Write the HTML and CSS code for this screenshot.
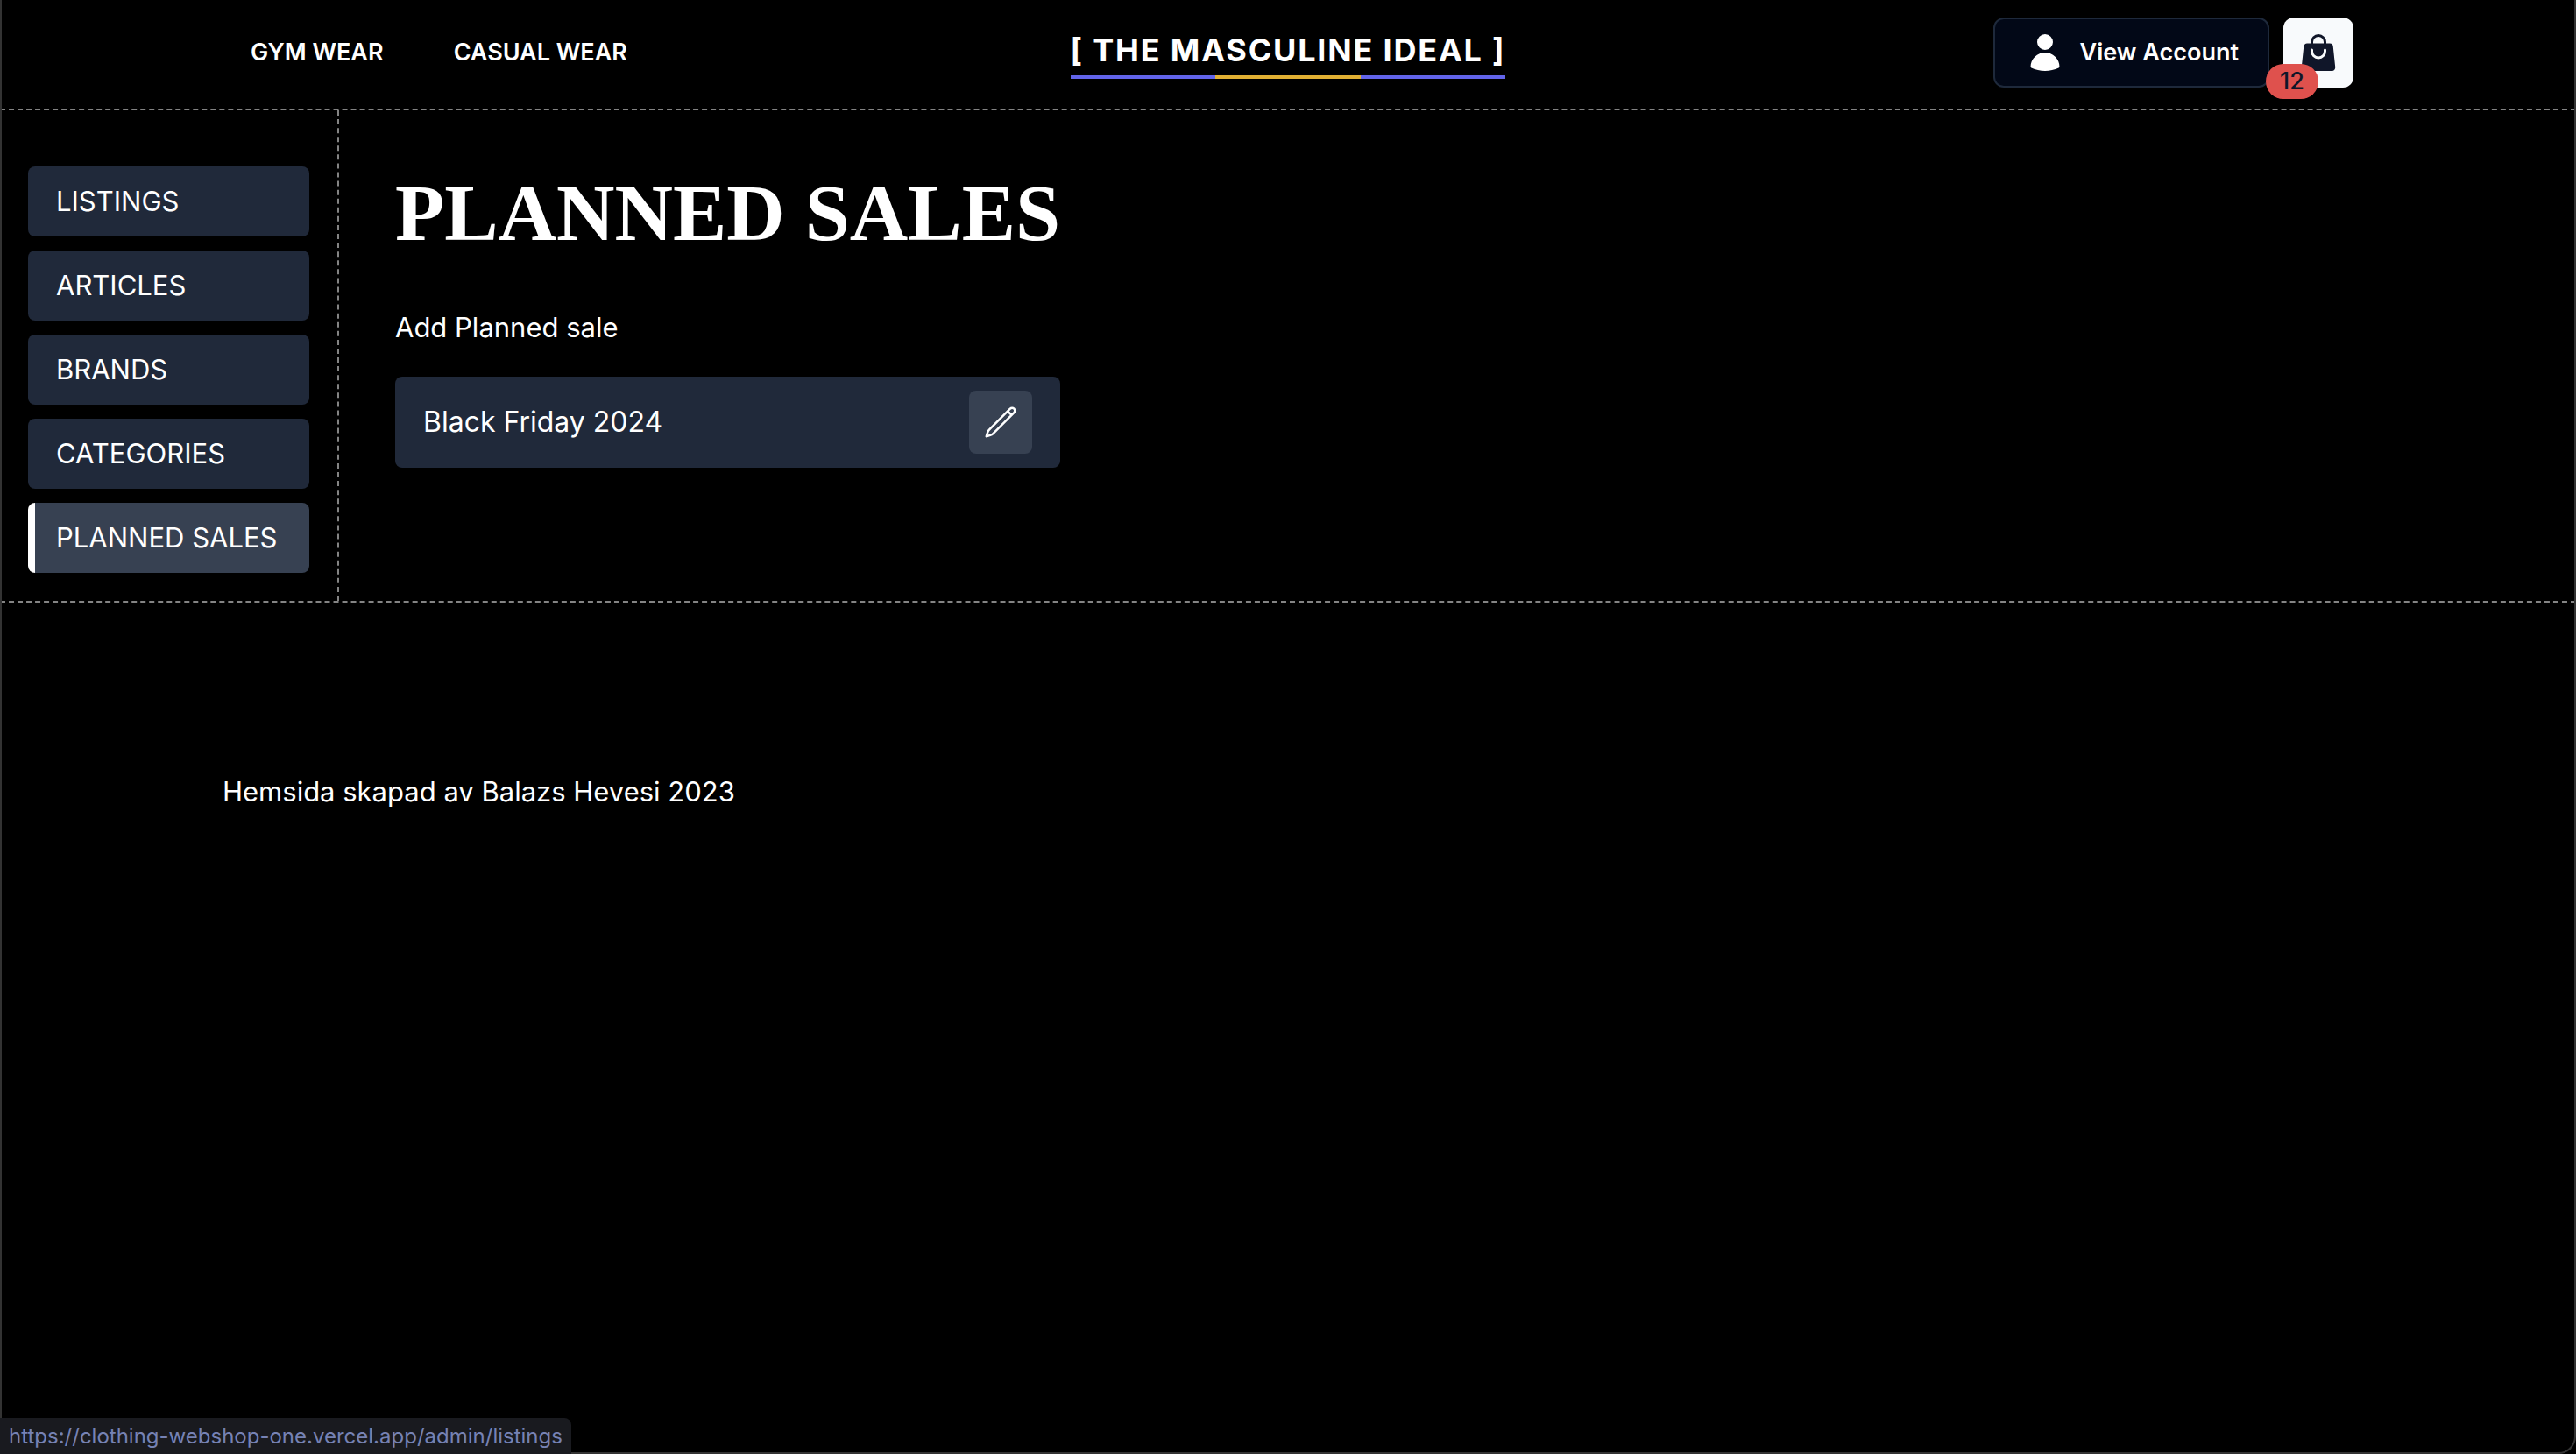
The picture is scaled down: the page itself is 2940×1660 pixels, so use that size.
FILE: index.html
```
<!DOCTYPE html>
<html lang="en">
<head>
  <meta charset="utf-8">
  <meta name="viewport" content="width=device-width, initial-scale=1">
  <title>Planned sales</title>
  <link rel="stylesheet" href="styles.css">
</head>
<body>
  <header class="site-header">
    <div class="container header-row">
      <nav class="main-nav" aria-label="Shop">
        <a href="#gym">GYM WEAR</a>
        <a href="#casual">CASUAL WEAR</a>
      </nav>
      <a class="logo" href="#home">[ THE MASCULINE IDEAL ]</a>
      <div class="actions">
        <button class="account-button" type="button">
          <svg class="icon" viewBox="0 0 24 24" fill="currentColor" aria-hidden="true">
            <path d="M7.5 6a4.5 4.5 0 1 1 9 0 4.5 4.5 0 0 1-9 0ZM3.751 20.105a8.25 8.25 0 0 1 16.498 0 .75.75 0 0 1-.437.695A18.683 18.683 0 0 1 12 22.5c-2.786 0-5.433-.608-7.812-1.7a.75.75 0 0 1-.437-.695Z"/>
          </svg>
          View Account
        </button>
        <button class="cart-button" type="button" aria-label="Cart, 12 items">
          <svg class="icon" viewBox="0 0 24 24" fill="currentColor" fill-rule="evenodd" aria-hidden="true">
            <path d="M7.5 6v.75H5.513c-.96 0-1.764.724-1.865 1.679l-1.263 12A1.875 1.875 0 0 0 4.25 22.5h15.5a1.875 1.875 0 0 0 1.865-2.071l-1.263-12a1.875 1.875 0 0 0-1.865-1.679H16.5V6a4.5 4.5 0 1 0-9 0ZM12 3a3 3 0 0 0-3 3v.75h6V6a3 3 0 0 0-3-3Zm-3 8.25a3 3 0 1 0 6 0v-.75a.75.75 0 0 1 1.5 0v.75a4.5 4.5 0 1 1-9 0v-.75a.75.75 0 0 1 1.5 0v.75Z"/>
          </svg>
          <span class="badge">12</span>
        </button>
      </div>
    </div>
  </header>

  <div class="admin">
    <nav class="sidebar" aria-label="Admin">
      <a href="#listings">LISTINGS</a>
      <a href="#articles">ARTICLES</a>
      <a href="#brands">BRANDS</a>
      <a href="#categories">CATEGORIES</a>
      <a class="active" href="#planned-sales" aria-current="page">PLANNED SALES</a>
    </nav>
    <main class="content">
      <h1>PLANNED SALES</h1>
      <a class="add-link" href="#add">Add Planned sale</a>
      <div class="sale">
        <span>Black Friday 2024</span>
        <button class="edit-button" type="button" aria-label="Edit Black Friday 2024">
          <svg viewBox="0 0 24 24" fill="none" stroke="currentColor" stroke-width="1.5" stroke-linecap="round" stroke-linejoin="round" aria-hidden="true">
            <path d="m16.862 4.487 1.687-1.688a1.875 1.875 0 1 1 2.652 2.652L6.832 19.82a4.5 4.5 0 0 1-1.897 1.13l-2.685.8.8-2.685a4.5 4.5 0 0 1 1.13-1.897L16.863 4.487Zm0 0L19.5 7.125"/>
          </svg>
        </button>
      </div>
    </main>
  </div>

  <footer class="site-footer">
    <p class="container">Hemsida skapad av Balazs Hevesi 2023</p>
  </footer>

  <div class="window-edge"></div>
  <div class="link-status">https://clothing-webshop-one.vercel.app/admin/listings</div>
</body>
</html>
```
FILE: styles.css
```
* {
  box-sizing: border-box;
}

body {
  margin: 0;
  min-height: 100vh;
  background: #000;
  color: #fff;
  font-family: Inter, "Liberation Sans", sans-serif;
  font-size: 31px;
  line-height: 48px;
}

a {
  color: inherit;
  text-decoration: none;
}

button {
  font: inherit;
  cursor: pointer;
}

svg {
  display: block;
}

.container {
  max-width: 2432px;
  margin: 0 auto;
}

.site-header {
  padding: 20px 0 24px;
  border-bottom: 2px dashed #848484;
}

.header-row {
  display: grid;
  grid-template-columns: 1fr auto 1fr;
  align-items: center;
}

.main-nav {
  display: flex;
  gap: 80px;
  padding-left: 32px;
  font-size: 27px;
  font-weight: 600;
}

.logo {
  padding-bottom: 2px;
  border-bottom: 4px solid;
  border-image: linear-gradient(to right, #6264ea 33.3%, #e2b033 33.3% 66.7%, #6264ea 66.7%) 1;
  font-size: 36px;
  font-weight: 700;
  line-height: 54px;
  letter-spacing: 0.05em;
  white-space: nowrap;
}

.actions {
  display: flex;
  justify-content: flex-end;
  gap: 16px;
}

.icon {
  width: 48px;
  height: 48px;
}

.account-button,
.cart-button {
  display: flex;
  align-items: center;
  height: 80px;
  border-radius: 12px;
  font-size: 27px;
}

.account-button {
  gap: 16px;
  padding: 0 33px;
  border: 2px solid #1e293b;
  background: #020817;
  color: #fff;
  font-weight: 600;
}

.cart-button {
  position: relative;
  justify-content: center;
  width: 80px;
  padding: 0;
  border: 0;
  background: #f8fafc;
  color: #101629;
  font-weight: 500;
}

.badge {
  position: absolute;
  left: -20px;
  bottom: -13px;
  padding: 0 16px;
  border-radius: 20px;
  background: #df514d;
  line-height: 40px;
}

.admin {
  display: flex;
  border-bottom: 2px dashed #848484;
}

.sidebar {
  display: flex;
  flex: 0 0 387px;
  flex-direction: column;
  gap: 16px;
  padding: 64px 32px 32px;
  border-right: 2px dashed #848484;
}

.sidebar a {
  padding: 16px 32px;
  border-radius: 8px;
  background: #20293a;
  white-space: nowrap;
}

.sidebar .active {
  background: linear-gradient(to right, #fff 8px, #374152 8px);
}

.content {
  display: flex;
  flex-direction: column;
  width: max-content;
  padding: 64px;
}

h1 {
  margin: 0 0 54px;
  font-family: "Liberation Serif", serif;
  font-size: 92px;
  font-weight: 700;
  line-height: 106px;
}

.add-link {
  align-self: flex-start;
  margin-bottom: 32px;
}

.sale {
  display: flex;
  align-items: center;
  justify-content: space-between;
  padding: 16px 32px;
  border-radius: 8px;
  background: #20293a;
  font-size: 32px;
}

.edit-button {
  padding: 16px;
  border: 0;
  border-radius: 8px;
  background: #374152;
  color: #fff;
}

.edit-button svg {
  width: 40px;
  height: 40px;
}

.site-footer {
  padding: 192px 0 64px;
}

.site-footer p {
  margin-top: 0;
  margin-bottom: 0;
}

.window-edge {
  position: fixed;
  inset: 0;
  border: 2px solid #333;
  border-top: 0;
  border-bottom-right-radius: 20px;
  pointer-events: none;
}

.link-status {
  position: fixed;
  bottom: 0;
  left: 0;
  padding: 0 10px;
  border-radius: 0 8px 0 0;
  background: #191a1f;
  color: #7682b4;
  font-size: 24px;
  line-height: 41px;
}
```
